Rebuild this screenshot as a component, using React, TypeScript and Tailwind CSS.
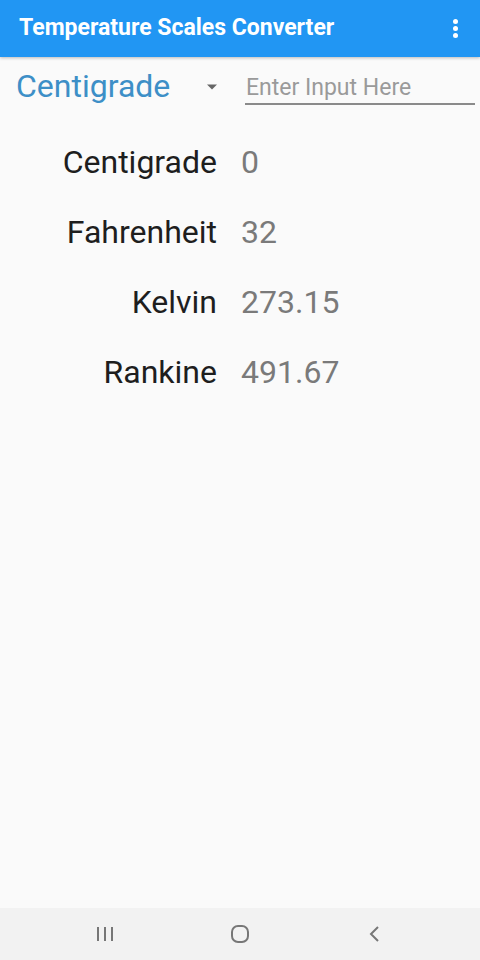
const rows = [
  { label: 'Centigrade', value: '0' },
  { label: 'Fahrenheit', value: '32' },
  { label: 'Kelvin', value: '273.15' },
  { label: 'Rankine', value: '491.67' },
]

export default function App() {
  return (
    <div
      className="h-[960px] w-[480px] flex flex-col bg-[#fafafa] overflow-hidden"
      style={{ fontFamily: 'Roboto, "Noto Sans", sans-serif' }}
    >
      <header className="h-[57px] bg-[#2196f3] flex items-center pl-[19px] pr-[17px] shadow-[0_1px_3px_rgba(0,0,0,0.25)]">
        <h1 className="flex-1 text-white text-[23px] font-bold">
          Temperature Scales Converter
        </h1>
        <div className="flex flex-col gap-[2px] items-center w-4">
          <span className="w-[5px] h-[5px] rounded-full bg-white" />
          <span className="w-[5px] h-[5px] rounded-full bg-white" />
          <span className="w-[5px] h-[5px] rounded-full bg-white" />
        </div>
      </header>

      <main className="flex-1">
        <div className="flex items-center h-[58px] pl-[16px] pr-[5px]">
          <div className="flex items-center w-[229px]">
            <span className="text-[32px] text-[#3d8fc7] leading-none">Centigrade</span>
            <svg width="12" height="8" viewBox="0 0 12 8" className="ml-[36px] mt-[1px]">
              <path d="M1 1.5 L11 1.5 L6 6.5 Z" fill="#666" />
            </svg>
          </div>
          <div className="flex-1 border-b-2 border-[#8a8a8a] pl-[1px] pt-[8px] leading-[26px]">
            <span className="text-[23px] text-[#9a9a9a]">Enter Input Here</span>
          </div>
        </div>

        <div className="flex flex-col mt-[21px] gap-[18px]">
          {rows.map((r) => (
            <div key={r.label} className="flex items-center h-[52px] text-[32px]">
              <span className="w-[217px] text-right text-[#1e1e1e]">{r.label}</span>
              <span className="ml-[24px] text-[#7a7a7a]">{r.value}</span>
            </div>
          ))}
        </div>
      </main>

      <nav className="h-[52px] bg-[#f2f2f2] flex items-center justify-center gap-[113px]">
        <svg width="22" height="18" viewBox="0 0 22 18">
          <path d="M4 2 V16 M11 2 V16 M18 2 V16" stroke="#777" strokeWidth="2" />
        </svg>
        <svg width="22" height="22" viewBox="0 0 22 22">
          <rect x="3" y="3" width="16" height="16" rx="6" fill="none" stroke="#777" strokeWidth="2" />
        </svg>
        <svg width="22" height="22" viewBox="0 0 22 22">
          <path d="M14 4 L7 11 L14 18" fill="none" stroke="#777" strokeWidth="2" />
        </svg>
      </nav>
    </div>
  )
}
